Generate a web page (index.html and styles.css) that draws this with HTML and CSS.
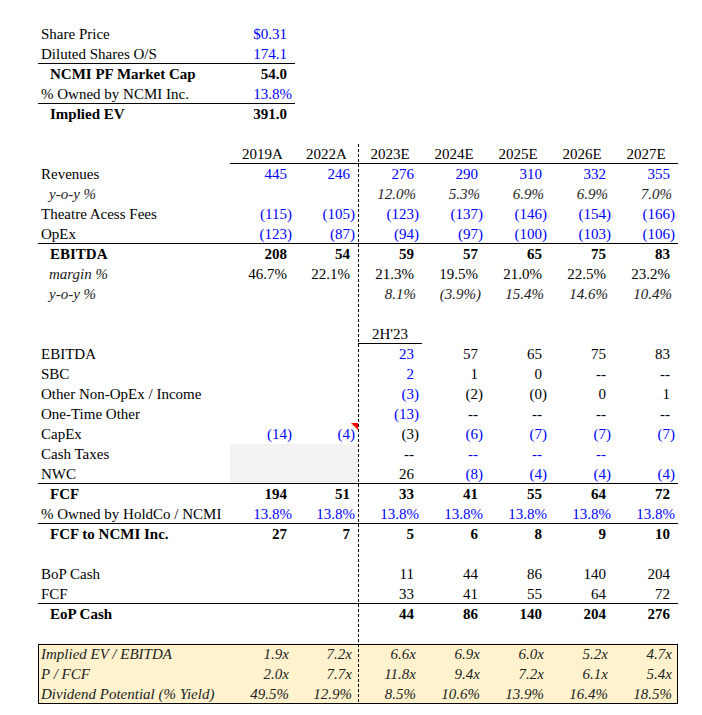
FILE: index.html
```html
<!DOCTYPE html>
<html>
<head>
<meta charset="utf-8">
<link rel="stylesheet" href="styles.css">
</head>
<body>
<table class="sheet">
<colgroup><col class="cl"><col class="c1"><col class="c2"><col class="cy"><col class="cy"><col class="cy"><col class="cy"><col class="cy"></colgroup>
<tbody class="top">
<tr><td class="l">Share Price</td><td class="n blue">$0.31</td></tr>
<tr class="u2"><td class="l">Diluted Shares O/S</td><td class="n blue">174.1</td></tr>
<tr><td class="l b">NCMI PF Market Cap</td><td class="n bold">54.0</td></tr>
<tr class="u2"><td class="l">% Owned by NCMI Inc.</td><td class="n pc blue">13.8%</td></tr>
<tr><td class="l b">Implied EV</td><td class="n bold">391.0</td></tr>
<tr><td class="l"></td><td></td></tr>
</tbody>
<tbody class="main">
<tr class="hdr"><td></td><td class="h">2019A</td><td class="h">2022A</td><td class="h">2023E</td><td class="h">2024E</td><td class="h">2025E</td><td class="h">2026E</td><td class="h">2027E</td></tr>
<tr><td class="l">Revenues</td><td class="n blue">445</td><td class="n blue">246</td><td class="n blue">276</td><td class="n blue">290</td><td class="n blue">310</td><td class="n blue">332</td><td class="n blue">355</td></tr>
<tr><td class="l i">y-o-y %</td><td></td><td></td><td class="n it">12.0%</td><td class="n it">5.3%</td><td class="n it">6.9%</td><td class="n it">6.9%</td><td class="n it">7.0%</td></tr>
<tr><td class="l">Theatre Acess Fees</td><td class="n p blue">(115)</td><td class="n p blue">(105)</td><td class="n p blue">(123)</td><td class="n p blue">(137)</td><td class="n p blue">(146)</td><td class="n p blue">(154)</td><td class="n p blue">(166)</td></tr>
<tr class="ln"><td class="l">OpEx</td><td class="n p blue">(123)</td><td class="n p blue">(87)</td><td class="n p blue">(94)</td><td class="n p blue">(97)</td><td class="n p blue">(100)</td><td class="n p blue">(103)</td><td class="n p blue">(106)</td></tr>
<tr><td class="l b">EBITDA</td><td class="n bold">208</td><td class="n bold">54</td><td class="n bold">59</td><td class="n bold">57</td><td class="n bold">65</td><td class="n bold">75</td><td class="n bold">83</td></tr>
<tr><td class="l i">margin %</td><td class="n">46.7%</td><td class="n">22.1%</td><td class="n">21.3%</td><td class="n">19.5%</td><td class="n">21.0%</td><td class="n">22.5%</td><td class="n">23.2%</td></tr>
<tr><td class="l i">y-o-y %</td><td></td><td></td><td class="n it">8.1%</td><td class="n it ip">(3.9%)</td><td class="n it">15.4%</td><td class="n it">14.6%</td><td class="n it">10.4%</td></tr>
<tr><td class="l"></td><td></td><td></td><td></td><td></td><td></td><td></td><td></td></tr>
<tr><td></td><td></td><td></td><td class="h hu">2H'23</td><td></td><td></td><td></td><td></td></tr>
<tr><td class="l">EBITDA</td><td></td><td></td><td class="n blue">23</td><td class="n">57</td><td class="n">65</td><td class="n">75</td><td class="n">83</td></tr>
<tr><td class="l">SBC</td><td></td><td></td><td class="n blue">2</td><td class="n">1</td><td class="n">0</td><td class="n">--</td><td class="n">--</td></tr>
<tr><td class="l">Other Non-OpEx / Income</td><td></td><td></td><td class="n p blue">(3)</td><td class="n p">(2)</td><td class="n p">(0)</td><td class="n">0</td><td class="n">1</td></tr>
<tr><td class="l">One-Time Other</td><td></td><td></td><td class="n p blue">(13)</td><td class="n">--</td><td class="n">--</td><td class="n">--</td><td class="n">--</td></tr>
<tr><td class="l">CapEx</td><td class="n p blue">(14)</td><td class="n p blue cmt">(4)</td><td class="n p">(3)</td><td class="n p blue">(6)</td><td class="n p blue">(7)</td><td class="n p blue">(7)</td><td class="n p blue">(7)</td></tr>
<tr><td class="l">Cash Taxes</td><td class="g"></td><td class="g"></td><td class="n">--</td><td class="n blue">--</td><td class="n blue">--</td><td class="n blue">--</td><td></td></tr>
<tr class="ln"><td class="l">NWC</td><td class="g"></td><td class="g"></td><td class="n">26</td><td class="n p blue">(8)</td><td class="n p blue">(4)</td><td class="n p blue">(4)</td><td class="n p blue">(4)</td></tr>
<tr><td class="l b">FCF</td><td class="n bold">194</td><td class="n bold">51</td><td class="n bold">33</td><td class="n bold">41</td><td class="n bold">55</td><td class="n bold">64</td><td class="n bold">72</td></tr>
<tr class="ln"><td class="l">% Owned by HoldCo / NCMI</td><td class="n pc blue">13.8%</td><td class="n pc blue">13.8%</td><td class="n pc blue">13.8%</td><td class="n pc blue">13.8%</td><td class="n pc blue">13.8%</td><td class="n pc blue">13.8%</td><td class="n pc blue">13.8%</td></tr>
<tr><td class="l b">FCF to NCMI Inc.</td><td class="n bold">27</td><td class="n bold">7</td><td class="n bold">5</td><td class="n bold">6</td><td class="n bold">8</td><td class="n bold">9</td><td class="n bold">10</td></tr>
<tr><td class="l"></td><td></td><td></td><td></td><td></td><td></td><td></td><td></td></tr>
<tr><td class="l">BoP Cash</td><td></td><td></td><td class="n">11</td><td class="n">44</td><td class="n">86</td><td class="n">140</td><td class="n">204</td></tr>
<tr class="ln"><td class="l">FCF</td><td></td><td></td><td class="n">33</td><td class="n">41</td><td class="n">55</td><td class="n">64</td><td class="n">72</td></tr>
<tr><td class="l b">EoP Cash</td><td></td><td></td><td class="n bold">44</td><td class="n bold">86</td><td class="n bold">140</td><td class="n bold">204</td><td class="n bold">276</td></tr>
<tr><td class="l"></td><td></td><td></td><td></td><td></td><td></td><td></td><td></td></tr>
<tr class="yb yt"><td class="l ii">Implied EV / EBITDA</td><td class="n it">1.9x</td><td class="n it">7.2x</td><td class="n it">6.6x</td><td class="n it">6.9x</td><td class="n it">6.0x</td><td class="n it">5.2x</td><td class="n it">4.7x</td></tr>
<tr class="yb"><td class="l ii">P / FCF</td><td class="n it">2.0x</td><td class="n it">7.7x</td><td class="n it">11.8x</td><td class="n it">9.4x</td><td class="n it">7.2x</td><td class="n it">6.1x</td><td class="n it">5.4x</td></tr>
<tr class="yb ybt"><td class="l ii">Dividend Potential (% Yield)</td><td class="n it">49.5%</td><td class="n it">12.9%</td><td class="n it">8.5%</td><td class="n it">10.6%</td><td class="n it">13.9%</td><td class="n it">16.4%</td><td class="n it">18.5%</td></tr>
</tbody>
</table>
</body>
</html>
```
FILE: styles.css
```css
html, body {
  margin: 0;
  padding: 0;
  background: #fff;
}
body {
  font-family: "Liberation Serif", "Times New Roman", serif;
  font-size: 15px;
  color: #000;
}
.sheet {
  margin: 24px 0 0 38px;
  border-collapse: separate;
  border-spacing: 0;
  table-layout: fixed;
  width: 640px;
}
.cl { width: 192px; }
.c1 { width: 65px; }
.c2 { width: 63px; }
.cy { width: 64px; }
.sheet td {
  height: 20px;
  padding: 0;
  line-height: 20px;
  white-space: nowrap;
  vertical-align: middle;
  box-sizing: border-box;
}
.l { padding-left: 3px !important; text-align: left; }
.l.b { padding-left: 12px !important; font-weight: bold; }
.l.i { padding-left: 11px !important; font-style: italic; color: #222; }
.l.ii { font-style: italic; color: #222; }
.n { text-align: right; padding-right: 8px !important; }
.n.p, .n.pc { padding-right: 3px !important; }
.n.it { font-style: italic; padding-right: 6px !important; color: #222; }
.n.it.ip { padding-right: 5px !important; }
.bold { font-weight: bold; }
.blue { color: #0000ff; }
.h { text-align: center; }
.g { background-color: #f2f2f2; }
.cmt { position: relative; }
.cmt::after {
  content: "";
  position: absolute;
  top: -1px;
  right: 0;
  border-top: 7px solid #ff0000;
  border-left: 7px solid transparent;
}
.main td:nth-child(4) {
  background-image: linear-gradient(to bottom, #000 0, #000 3px, transparent 3px, transparent 5px);
  background-size: 1px 5px;
  background-repeat: repeat-y;
  background-position: 0 0;
}
.u2 td:nth-child(-n+2) { box-shadow: inset 0 -1px #000; }
.ln td { box-shadow: inset 0 -1px #000; }
.hdr td:not(:first-child) { box-shadow: inset 0 -1px #000; }
.hu { box-shadow: inset 0 -1px #000; }
.yb td { background-color: #fff2cc; }
.yb td:first-child { box-shadow: inset 1px 0 #000; }
.yb td:last-child { box-shadow: inset -1px 0 #000; }
.yb.yt td { box-shadow: inset 0 1px #000; }
.yb.yt td:first-child { box-shadow: inset 1px 0 #000, inset 0 1px #000; }
.yb.yt td:last-child { box-shadow: inset -1px 0 #000, inset 0 1px #000; }
.yb.ybt td { box-shadow: inset 0 -1px #000; }
.yb.ybt td:first-child { box-shadow: inset 1px 0 #000, inset 0 -1px #000; }
.yb.ybt td:last-child { box-shadow: inset -1px 0 #000, inset 0 -1px #000; }
```
